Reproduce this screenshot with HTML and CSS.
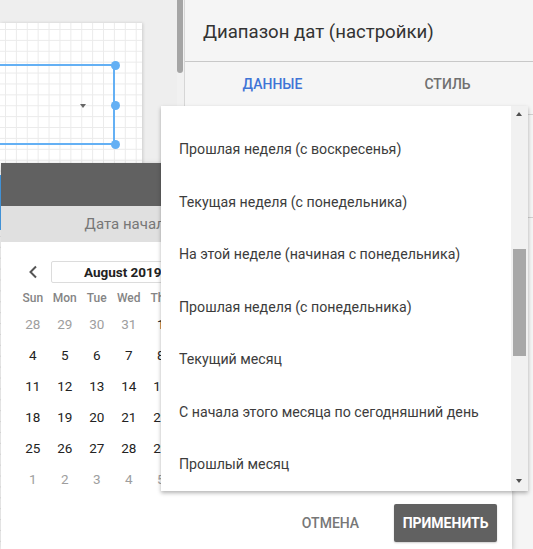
FILE: index.html
```html
<!DOCTYPE html>
<html lang="ru">
<head>
<meta charset="utf-8">
<title>Диапазон дат</title>
<link rel="stylesheet" href="styles.css">
</head>
<body>
<div class="app">
  <div class="workspace">
    <div class="canvas-area">
      <div class="canvas">
        <div class="selection">
          <span class="caret"></span>
          <span class="handle h-top"></span>
          <span class="handle h-mid"></span>
          <span class="handle h-bot"></span>
        </div>
        <div class="edge-mark"></div>
      </div>
    </div>
    <div class="vscroll"><div class="vthumb"></div></div>
  </div>
  <div class="panel">
    <div class="panel-head">Диапазон дат (настройки)</div>
    <div class="tabs">
      <div class="tab active">Данные</div>
      <div class="tab">Стиль</div>
    </div>
    <div class="panel-body">
      <div class="prow prow-a"></div>
      <div class="prow prow-b"></div>
    </div>
  </div>
</div>

<div class="dialog">
  <div class="dlg-head"></div>
  <div class="dlg-sub">
    <div class="sub-col">Дата начала</div>
    <div class="sub-col"></div>
  </div>
  <div class="cals">
    <div class="cal">
      <div class="cal-nav">
        <span class="chev"><svg width="10" height="14" viewBox="0 0 10 14"><path d="M8 1.5 2.5 7 8 12.5" fill="none" stroke="#555" stroke-width="2"/></svg></span>
        <span class="month">August 2019</span>
        <span class="chev"><svg width="10" height="14" viewBox="0 0 10 14"><path d="M2 1.5 7.5 7 2 12.5" fill="none" stroke="#555" stroke-width="2"/></svg></span>
      </div>
      <div class="days">
        <span class="dh">Sun</span><span class="dh">Mon</span><span class="dh">Tue</span><span class="dh">Wed</span><span class="dh">Thu</span><span class="dh">Fri</span><span class="dh">Sat</span>
        <span class="d o">28</span><span class="d o">29</span><span class="d o">30</span><span class="d o">31</span><span class="d">1</span><span class="d">2</span><span class="d">3</span>
        <span class="d">4</span><span class="d">5</span><span class="d">6</span><span class="d">7</span><span class="d">8</span><span class="d">9</span><span class="d">10</span>
        <span class="d">11</span><span class="d">12</span><span class="d">13</span><span class="d">14</span><span class="d">15</span><span class="d">16</span><span class="d">17</span>
        <span class="d">18</span><span class="d">19</span><span class="d">20</span><span class="d">21</span><span class="d">22</span><span class="d">23</span><span class="d">24</span>
        <span class="d">25</span><span class="d">26</span><span class="d">27</span><span class="d">28</span><span class="d">29</span><span class="d">30</span><span class="d">31</span>
        <span class="d o">1</span><span class="d o">2</span><span class="d o">3</span><span class="d o">4</span><span class="d o">5</span><span class="d o">6</span><span class="d o">7</span>
      </div>
    </div>
    <div class="cal"></div>
  </div>
  <div class="dlg-foot">
    <span class="btn-cancel">Отмена</span>
    <span class="btn-apply">Применить</span>
  </div>
</div>

<div class="menu">
  <div class="menu-list">
    <div class="mi">Прошлая неделя (с воскресенья)</div>
    <div class="mi">Текущая неделя (с понедельника)</div>
    <div class="mi">На этой неделе (начиная с понедельника)</div>
    <div class="mi">Прошлая неделя (с понедельника)</div>
    <div class="mi">Текущий месяц</div>
    <div class="mi">С начала этого месяца по сегодняшний день</div>
    <div class="mi">Прошлый месяц</div>
  </div>
  <div class="mscroll">
    <span class="arr up"></span>
    <span class="mthumb"></span>
    <span class="arr down"></span>
  </div>
</div>
</body>
</html>
```
FILE: styles.css
```css
* { box-sizing: border-box; }
html, body { margin: 0; padding: 0; }
body {
  width: 533px;
  height: 549px;
  overflow: hidden;
  position: relative;
  background: #eeeeee;
  font-family: Roboto, "Noto Sans", "Liberation Sans", sans-serif;
  color: #333;
}

.app { display: flex; height: 549px; }

/* workspace */
.workspace { width: 184px; display: flex; }
.canvas-area { flex: 1; padding-top: 23px; }
.canvas {
  width: 142px;
  height: 100%;
  position: relative;
  background-color: #fff;
  background-image:
    linear-gradient(#ebebeb 1px, transparent 1px),
    linear-gradient(90deg, #ebebeb 1px, transparent 1px);
  background-size: 10.9px 10.9px;
  background-position: 5px 6px;
  box-shadow: 1px 0 3px rgba(0,0,0,0.14);
}
.selection {
  position: absolute;
  left: -20px;
  top: 41px;
  width: 135px;
  height: 81px;
  border: 2px solid #64b0f4;
}
.caret {
  position: absolute;
  left: 98px;
  top: 38px;
  width: 0; height: 0;
  border-left: 3.5px solid transparent;
  border-right: 3.5px solid transparent;
  border-top: 4px solid #666;
}
.handle {
  position: absolute;
  right: -6.5px;
  width: 9px; height: 9px;
  border-radius: 50%;
  background: #64b0f4;
}
.h-top { top: -5.5px; }
.h-mid { top: 34.5px; }
.h-bot { bottom: -5.5px; }
.edge-mark {
  position: absolute;
  left: 0; top: 152px;
  width: 2px; height: 55px;
  background: #4aa3f0;
}
.vscroll { width: 7px; background: #f1f1f1; }
.vthumb { width: 6px; height: 73px; background: #a5a5a5; border-radius: 0 0 3px 3px; }

/* right panel */
.panel { flex: 1; background: #f5f5f5; border-left: 1px solid #d6d6d6; }
.panel-head {
  height: 62px;
  padding: 21px 0 0 18px;
  font-size: 18.6px;
  color: #333;
  border-bottom: 1px solid #c8c8c8;
}
.tabs { display: flex; height: 44px; }
.tab {
  flex: 1;
  display: flex; align-items: center; justify-content: center;
  font-size: 14px; font-weight: 500;
  text-transform: uppercase;
  color: #707070;
}
.tab:first-child { padding-left: 2px; }
.tab:last-child { padding-left: 4px; }
.tab.active { color: #3f74d6; }
.panel-body { padding-top: 8px; }
.prow { border-top: 1px solid #d0d0d0; }
.prow-a { height: 103px; }
.prow-b { height: 100px; }

/* date dialog */
.dialog {
  position: absolute;
  left: 1px; top: 163px;
  width: 511px; height: 386px;
  background: #fff;
  box-shadow: 0 2px 6px rgba(0,0,0,0.25);
  display: flex; flex-direction: column;
}
.dlg-head { height: 43px; background: #616161; }
.dlg-sub { height: 36px; background: #e0e0e0; display: flex; }
.sub-col {
  flex: 1;
  display: flex; align-items: center; justify-content: center;
  font-size: 15px; color: #777;
}
.cals { flex: 1; display: flex; padding-top: 19px; }
.cal { flex: 1; display: flex; flex-direction: column; align-items: center; }
.cal-nav {
  display: grid;
  grid-template-columns: 32px 160px 32px;
  height: 22px;
  align-items: center;
}
.chev { display: flex; justify-content: center; align-items: center; }
.month {
  height: 22px;
  margin-left: 2px;
  padding-right: 14px;
  border: 1px solid #dcdcdc;
  border-radius: 2px;
  display: flex; align-items: center; justify-content: center;
  font-size: 13.5px; font-weight: 700; color: #222;
}
.days {
  margin-top: 5px;
  display: grid;
  grid-template-columns: repeat(7, 32px);
  grid-template-rows: 20px repeat(6, 31px);
  align-items: center;
  justify-items: center;
}
.dh { font-size: 12px; font-weight: 500; color: #858585; }
.d { font-size: 13.5px; color: #222; }
.d.o { color: #9e9e9e; }
.dlg-foot {
  display: flex; justify-content: flex-end; align-items: center;
  padding: 0 15px 7px 0;
}
.btn-cancel {
  padding: 0 16px;
  margin-right: 19px;
  font-size: 14px; font-weight: 500;
  text-transform: uppercase;
  color: #777;
}
.btn-apply {
  height: 38px;
  padding: 0 8.5px;
  display: flex; align-items: center;
  background: #616161;
  border-radius: 2px;
  font-size: 14px; font-weight: 700;
  text-transform: uppercase;
  color: #fff;
  box-shadow: 0 1px 2px rgba(0,0,0,0.2);
}

/* dropdown menu */
.menu {
  position: absolute;
  left: 161px; top: 106px;
  width: 367px; height: 385px;
  background: #fff;
  box-shadow: 0 2px 4px rgba(0,0,0,0.3);
  display: flex;
}
.menu-list { flex: 1; padding-top: 17px; }
.mi {
  height: 52.5px;
  display: flex; align-items: center;
  padding-left: 18px;
  font-size: 14.2px;
  color: #3c3c3c;
  white-space: nowrap;
}
.mscroll { width: 17px; background: #f1f1f1; position: relative; }
.arr {
  position: absolute; left: 5px;
  width: 0; height: 0;
  border-left: 3.5px solid transparent;
  border-right: 3.5px solid transparent;
}
.arr.up { top: 6px; border-bottom: 4px solid #505050; }
.arr.down { top: 373px; border-top: 4px solid #505050; }
.mthumb {
  position: absolute;
  left: 2px; top: 143px;
  width: 13px; height: 107px;
  background: #a8a8a8;
}
```
